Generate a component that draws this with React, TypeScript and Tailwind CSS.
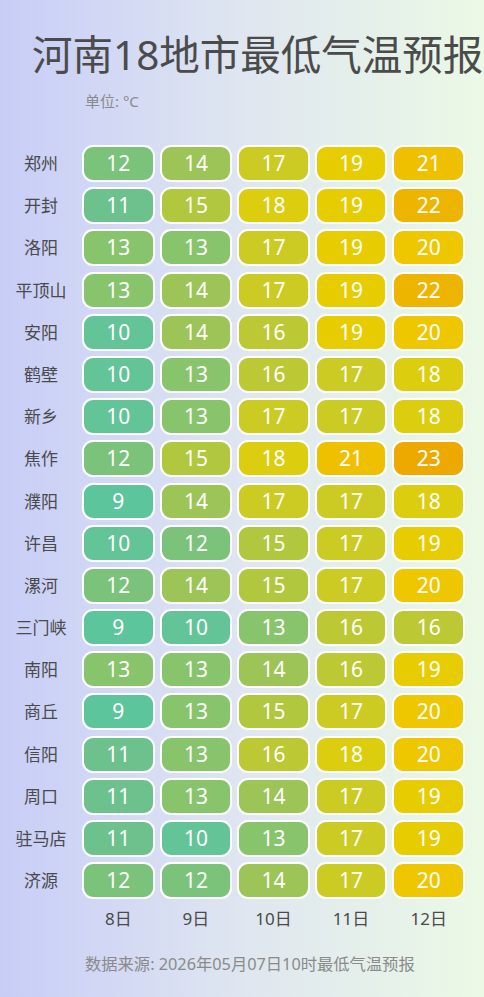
import React from 'react';

const font = { fontFamily: '"Noto Sans", "Noto Sans CJK SC", sans-serif' };

const days = ['8日', '9日', '10日', '11日', '12日'];

const rows: [string, number[]][] = [
  ['郑州', [12, 14, 17, 19, 21]],
  ['开封', [11, 15, 18, 19, 22]],
  ['洛阳', [13, 13, 17, 19, 20]],
  ['平顶山', [13, 14, 17, 19, 22]],
  ['安阳', [10, 14, 16, 19, 20]],
  ['鹤壁', [10, 13, 16, 17, 18]],
  ['新乡', [10, 13, 17, 17, 18]],
  ['焦作', [12, 15, 18, 21, 23]],
  ['濮阳', [9, 14, 17, 17, 18]],
  ['许昌', [10, 12, 15, 17, 19]],
  ['漯河', [12, 14, 15, 17, 20]],
  ['三门峡', [9, 10, 13, 16, 16]],
  ['南阳', [13, 13, 14, 16, 19]],
  ['商丘', [9, 13, 15, 17, 20]],
  ['信阳', [11, 13, 16, 18, 20]],
  ['周口', [11, 13, 14, 17, 19]],
  ['驻马店', [11, 10, 13, 17, 19]],
  ['济源', [12, 12, 14, 17, 20]],
];

const colors: Record<number, string> = {
  9: 'bg-[#5cc59c]',
  10: 'bg-[#62c497]',
  11: 'bg-[#6cc18c]',
  12: 'bg-[#7bc27a]',
  13: 'bg-[#88c46c]',
  14: 'bg-[#9cc456]',
  15: 'bg-[#b1c73e]',
  16: 'bg-[#bcc834]',
  17: 'bg-[#cbcb23]',
  18: 'bg-[#dccd0f]',
  19: 'bg-[#e7cc02]',
  20: 'bg-[#eec700]',
  21: 'bg-[#efc000]',
  22: 'bg-[#eeb500]',
  23: 'bg-[#eda900]',
};

const Cell = ({ v }: { v: number }) => (
  <div
    className={`h-[37px] rounded-[11px] border-2 border-white flex items-center justify-center text-white text-[21px] leading-none ${colors[v]}`}
  >
    {v}
  </div>
);

export default function App() {
  return (
    <div
      className="w-[484px] h-[997px] bg-gradient-to-r from-[#c8cdf7] via-[#dfe6f0] to-[#ebf9e5] flex flex-col"
      style={font}
    >
      <h1 className="pt-[31px] pl-[32px] text-[40.5px] leading-[48px] text-[#4b4b4b] whitespace-nowrap font-normal">
        河南18地市最低气温预报
      </h1>
      <div className="mt-[12px] pl-[85px] text-[15px] leading-[20px] text-[#8a8a8a]">单位: °C</div>

      <div className="mt-[34px] flex flex-col gap-[5.2px]">
        {rows.map(([city, vals]) => (
          <div key={city} className="flex items-center">
            <div className="w-[82px] text-center text-[17px] text-[#4a4a4a] leading-[37px]">{city}</div>
            <div className="w-[383px] grid grid-cols-5 gap-[5px]">
              {vals.map((v, i) => (
                <Cell key={i} v={v} />
              ))}
            </div>
          </div>
        ))}
      </div>

      <div className="mt-[8px] flex">
        <div className="w-[82px]" />
        <div className="w-[383px] grid grid-cols-5 gap-[5px]">
          {days.map((d) => (
            <div key={d} className="text-center text-[17px] leading-[24px] text-[#4a4a4a]">
              {d}
            </div>
          ))}
        </div>
      </div>

      <div className="mt-[22px] pl-[85px] text-[16.3px] leading-[22px] text-[#8a8a8a] whitespace-nowrap">
        数据来源: 2026年05月07日10时最低气温预报
      </div>
    </div>
  );
}
